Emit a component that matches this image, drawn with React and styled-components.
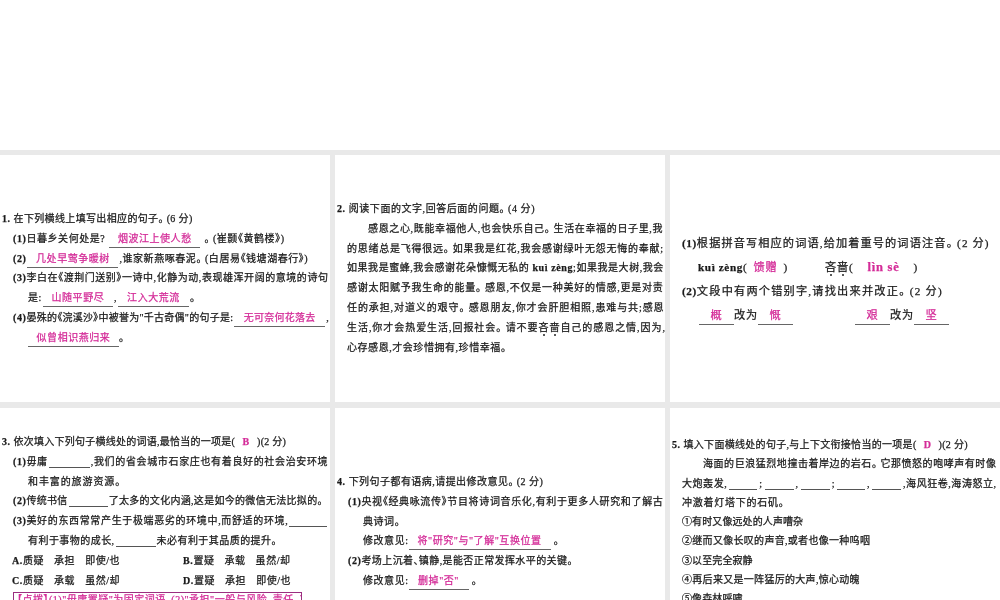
import React from 'react';
import styled, { createGlobalStyle } from 'styled-components';

const GlobalStyle = createGlobalStyle`
html, body {
  margin: 0;
  height: 100%;
  overflow: hidden;
  background: #fff;
}
`;

const Page = styled.div`
width: 1000px;
height: 600px;
overflow: hidden;
filter: blur(0.4px);
`;

const TopBlank = styled.div`
height: 150px;
background: #fff;
`;

const Sheet = styled.div`
display: grid;
grid-template-columns: 330px 330px 330px;
grid-auto-rows: 247px;
gap: 6px 5px;
padding: 5px 0;
background: #e9e9e9;
`;

const Card = styled.section`
box-sizing: border-box;
background: #fff;
padding: ${p => p.$top}px 0 0 ${p => p.$left}px;
font-family: "Liberation Serif", "Noto Sans CJK SC", serif;
font-size: 10px;
color: #1a1a1a;
-webkit-text-stroke: 0.25px;
font-feature-settings: "palt";
overflow: hidden;
`;

const Line = styled.div`
height: ${p => p.$h || 19.8}px;
line-height: ${p => p.$h || 19.8}px;
margin-left: ${p => p.$indent || 0}px;
letter-spacing: ${p => p.$sp ?? 0.55}px;
white-space: nowrap;
`;

const Num = styled.b`
font-weight: 700;
letter-spacing: 0.6px;
`;

const Blank = styled.span`
display: inline-block;
box-sizing: border-box;
width: ${p => p.$w}px;
line-height: 13px;
padding-bottom: 2px;
border-bottom: 1px solid #666;
text-align: center;
color: #d42c98;
margin: 0 ${p => p.$m ?? 1}px;
`;

const Gap = styled.span`
display: inline-block;
width: ${p => p.$w}px;
height: 1px;
background: #555;
vertical-align: -3px;
margin: 0 ${p => p.$m ?? 1}px;
`;

const Answer = styled.span`
display: inline-block;
width: ${p => p.$w}px;
text-align: center;
color: #d42c98;
`;

const Pinyin = styled(Answer)`
font-weight: 700;
font-size: 12.5px;
`;

const Dotted = styled.span`
position: relative;
&::after {
  content: "";
  position: absolute;
  left: 42%;
  bottom: -3px;
  width: 2px;
  height: 2px;
  border-radius: 50%;
  background: #222;
}
`;

const Choices = styled.div`
display: grid;
grid-template-columns: 171px 160px;
margin-left: 10px;
`;

const Word = styled.span`
display: inline-block;
margin-right: 10px;
`;

const Note = styled.div`
box-sizing: border-box;
width: 289px;
margin: 2px 0 0 11px;
padding: 1px 3px;
border: 1px solid #9a2f80;
color: #d42c98;
line-height: 12px;
letter-spacing: 0.5px;
white-space: nowrap;
overflow: hidden;
`;

const Bigger = styled.div`
font-size: 11.2px;
`;

const Spread = styled.span`
display: inline-block;
margin-left: ${p => p.$l}px;
`;

function Choice({ letter, words }) {
    return (
        <Line>
            <Num>{letter}.</Num><Word>{words[0]}</Word><Word>{words[1]}</Word>{words[2]}
        </Line>
    );
}

function App() {
    return (
        <>
            <GlobalStyle />
            <Page>
                <TopBlank />
                <Sheet>
                    <Card $top={54} $left={2}>
                        <Line $sp={0.35}><Num>1.</Num> 在下列横线上填写出相应的句子。 (6 分)</Line>
                        <Line $indent={11}><Num>(1)</Num>日暮乡关何处是?<Blank $w={91} $m={4}>烟波江上使人愁</Blank>。 (崔颢《黄鹤楼》)</Line>
                        <Line $indent={11}><Num>(2)</Num><Blank $w={91}>几处早莺争暖树</Blank>,谁家新燕啄春泥。 (白居易《钱塘湖春行》)</Line>
                        <Line $indent={11}><Num>(3)</Num>李白在《渡荆门送别》一诗中,化静为动,表现雄浑开阔的意境的诗句</Line>
                        <Line $indent={26}>是:<Blank $w={70}>山随平野尽</Blank>,<Blank $w={71}>江入大荒流</Blank>。</Line>
                        <Line $indent={11} $sp={0.25}><Num>(4)</Num>晏殊的《浣溪沙》中被誉为"千古奇偶"的句子是:<Blank $w={91}>无可奈何花落去</Blank>,</Line>
                        <Line $indent={26}><Blank $w={91} $m={0}>似曾相识燕归来</Blank>。</Line>
                    </Card>
                    <Card $top={44} $left={2}>
                        <Line><Num>2.</Num> 阅读下面的文字,回答后面的问题。 (4 分)</Line>
                        <Line $indent={31} $sp={0.65}>感恩之心,既能幸福他人,也会快乐自己。 生活在幸福的日子里,我</Line>
                        <Line $indent={10} $sp={0.75}>的思绪总是飞得很远。 如果我是红花,我会感谢绿叶无怨无悔的奉献;</Line>
                        <Line $indent={10}>如果我是蜜蜂,我会感谢花朵慷慨无私的 <Num>kuì zèng</Num>;如果我是大树,我会</Line>
                        <Line $indent={10} $sp={0.75}>感谢太阳赋予我生命的能量。 感恩,不仅是一种美好的情感,更是对责</Line>
                        <Line $indent={10} $sp={0.9}>任的承担,对道义的艰守。 感恩朋友,你才会肝胆相照,患难与共;感恩</Line>
                        <Line $indent={10} $sp={0.95}>生活,你才会热爱生活,回报社会。 请不要<Dotted>吝</Dotted><Dotted>啬</Dotted>自己的感恩之情,因为,</Line>
                        <Line $indent={10}>心存感恩,才会珍惜拥有,珍惜幸福。</Line>
                    </Card>
                    <Card $top={76} $left={12}>
                        <Bigger>
                            <Line $h={24} $sp={1.1}><Num>(1)</Num>根据拼音写相应的词语,给加着重号的词语注音。 (2 分)</Line>
                            <Line $h={24} $sp={0.8} $indent={16}>
                                <Num>kuì zèng</Num>(<Answer $w={36}>馈赠</Answer>)
                                <Spread $l={37}><Dotted>吝</Dotted><Dotted>啬</Dotted>(</Spread>
                                <Pinyin $w={60}>lìn sè</Pinyin>)
                            </Line>
                            <Line $h={24} $sp={1.2}><Num>(2)</Num>文段中有两个错别字,请找出来并改正。 (2 分)</Line>
                            <Line $h={24} $sp={0.8} $indent={17}>
                                <Blank $w={35} $m={0}>概</Blank>改为<Blank $w={35} $m={0}>慨</Blank>
                                <Spread $l={62}><Blank $w={35} $m={0}>艰</Blank>改为<Blank $w={35} $m={0}>坚</Blank></Spread>
                            </Line>
                        </Bigger>
                    </Card>
                    <Card $top={24} $left={2}>
                        <Line $sp={0.25}><Num>3.</Num> 依次填入下列句子横线处的词语,最恰当的一项是(<Answer $w={22}><Num>B</Num></Answer>)(2 分)</Line>
                        <Line $indent={11} $sp={0.65}><Num>(1)</Num>毋庸<Gap $w={41} />,我们的省会城市石家庄也有着良好的社会治安环境</Line>
                        <Line $indent={26} $sp={0.9}>和丰富的旅游资源。</Line>
                        <Line $indent={11} $sp={0.3}><Num>(2)</Num>传统书信<Gap $w={39} />了太多的文化内涵,这是如今的微信无法比拟的。</Line>
                        <Line $indent={11} $sp={0.65}><Num>(3)</Num>美好的东西常常产生于极端恶劣的环境中,而舒适的环境,<Gap $w={38} /></Line>
                        <Line $indent={26} $sp={0.45}>有利于事物的成长,<Gap $w={40} />未必有利于其品质的提升。</Line>
                        <Choices>
                            <Choice letter="A" words={['质疑', '承担', '即使/也']} />
                            <Choice letter="B" words={['置疑', '承载', '虽然/却']} />
                            <Choice letter="C" words={['质疑', '承载', '虽然/却']} />
                            <Choice letter="D" words={['置疑', '承担', '即使/也']} />
                        </Choices>
                        <Note>【点拨】(1)"毋庸置疑"为固定词语。(2)"承担"一般与风险、责任、工作等搭配。</Note>
                    </Card>
                    <Card $top={64} $left={2}>
                        <Line $sp={0.45}><Num>4.</Num> 下列句子都有语病,请提出修改意见。 (2 分)</Line>
                        <Line $indent={11} $sp={0.65}><Num>(1)</Num>央视《经典咏流传》节目将诗词音乐化,有利于更多人研究和了解古</Line>
                        <Line $indent={26}>典诗词。</Line>
                        <Line $indent={26}>修改意见:<Blank $w={142} $m={0}>将"研究"与"了解"互换位置</Blank> 。</Line>
                        <Line $indent={11} $sp={0.4}><Num>(2)</Num>考场上沉着、镇静,是能否正常发挥水平的关键。</Line>
                        <Line $indent={26}>修改意见:<Blank $w={60} $m={0}>删掉"否"</Blank> 。</Line>
                    </Card>
                    <Card $top={27} $left={2}>
                        <Line $h={19.3} $sp={0.3}><Num>5.</Num> 填入下面横线处的句子,与上下文衔接恰当的一项是(<Answer $w={22}><Num>D</Num></Answer>)(2 分)</Line>
                        <Line $h={19.3} $indent={31}>海面的巨浪猛烈地撞击着岸边的岩石。 它那愤怒的咆哮声有时像</Line>
                        <Line $h={19.3} $indent={10}>大炮轰发,<Gap $w={28} $m={2} />;<Gap $w={29} $m={2} />,<Gap $w={29} $m={2} />;<Gap $w={28} $m={2} />,<Gap $w={29} $m={2} />,海风狂卷,海涛怒立,</Line>
                        <Line $h={19.3} $indent={10} $sp={0.75}>冲激着灯塔下的石矶。</Line>
                        <Line $h={19.3} $indent={10} $sp={0.1}>①有时又像远处的人声嘈杂</Line>
                        <Line $h={19.3} $indent={10} $sp={0.3}>②继而又像长叹的声音,或者也像一种呜咽</Line>
                        <Line $h={19.3} $indent={10} $sp={0.1}>③以至完全寂静</Line>
                        <Line $h={19.3} $indent={10} $sp={0.3}>④再后来又是一阵猛厉的大声,惊心动魄</Line>
                        <Line $h={19.3} $indent={10} $sp={0.1}>⑤像森林呼啸</Line>
                    </Card>
                </Sheet>
            </Page>
        </>
    );
}

export default App;
